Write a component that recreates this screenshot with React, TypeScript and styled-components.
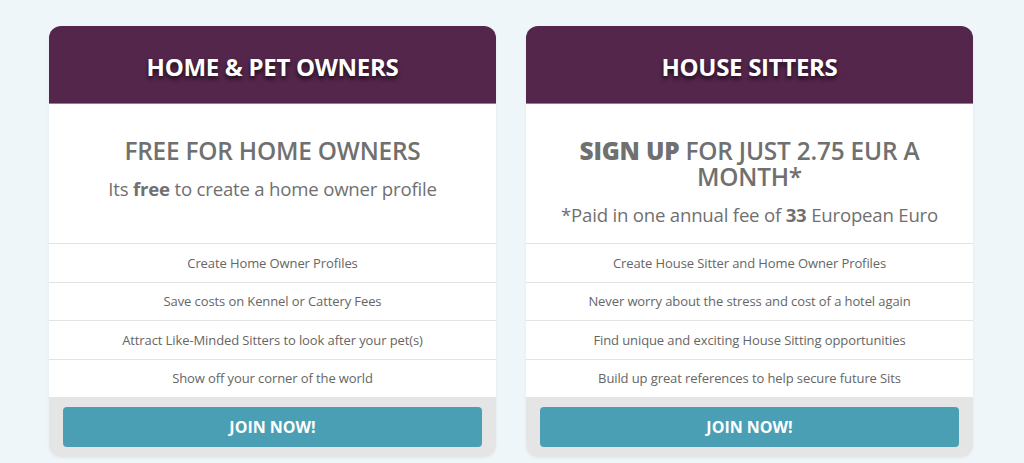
import React from 'react'
import styled, { createGlobalStyle } from 'styled-components'

const GlobalStyle = createGlobalStyle`
  html, body {
    margin: 0;
    padding: 0;
    background: #eef6f9;
    font-family: 'Open Sans', 'Noto Sans', sans-serif;
  }
`

const Page = styled.div`
  display: grid;
  grid-template-columns: repeat(2, 447px);
  gap: 30px;
  padding: 26px 0 6px 49px;
`

const Card = styled.div`
  display: flex;
  flex-direction: column;
  background: #ffffff;
  border-radius: 12px;
  overflow: hidden;
  box-shadow: 0 1px 3px rgba(0, 0, 0, 0.06);
`

const Header = styled.div`
  height: 78px;
  display: flex;
  align-items: center;
  justify-content: center;
  padding-top: 3px;
  background: #54264b;
  border-bottom: 1px solid #9c7a94;
  box-sizing: border-box;
`

const HeaderTitle = styled.h2`
  margin: 0;
  color: #ffffff;
  font-size: 24px;
  font-weight: 700;
  letter-spacing: -0.3px;
  text-shadow: 0 3px 4px rgba(0, 0, 0, 0.65);
`

const Intro = styled.div`
  flex: 1;
  display: flex;
  flex-direction: column;
  align-items: center;
  padding: 34px 24px 16px;
  text-align: center;
  color: #707070;
`

const Price = styled.h3`
  margin: 0;
  font-size: 24.4px;
  line-height: 26px;
  font-weight: 600;
  letter-spacing: -0.2px;

  b {
    font-weight: 800;
  }
`

const Note = styled.p`
  margin: 13px 0 0;
  font-size: 18.6px;
  line-height: 24px;
  letter-spacing: -0.2px;

  b {
    font-weight: 700;
  }
`

const Features = styled.ul`
  list-style: none;
  margin: 0;
  padding: 0;
`

const Feature = styled.li`
  height: 38.5px;
  box-sizing: border-box;
  display: flex;
  align-items: center;
  justify-content: center;
  border-top: 1px solid #e3e3e3;
  color: #666666;
  font-size: 13px;
  letter-spacing: -0.1px;
`

const Footer = styled.div`
  background: #e5e5e5;
  padding: 10px 14px 10px;
`

const JoinButton = styled.button`
  display: block;
  width: 100%;
  height: 40px;
  border: none;
  border-radius: 4px;
  background: #4a9fb5;
  color: #ffffff;
  font-family: inherit;
  font-size: 16px;
  font-weight: 700;
  cursor: pointer;
`

interface PlanProps {
  title: string
  price: React.ReactNode
  note: React.ReactNode
  features: string[]
}

function Plan({ title, price, note, features }: PlanProps) {
  return (
    <Card>
      <Header>
        <HeaderTitle>{title}</HeaderTitle>
      </Header>
      <Intro>
        <Price>{price}</Price>
        <Note>{note}</Note>
      </Intro>
      <Features>
        {features.map((f) => (
          <Feature key={f}>{f}</Feature>
        ))}
      </Features>
      <Footer>
        <JoinButton>JOIN NOW!</JoinButton>
      </Footer>
    </Card>
  )
}

export default function App() {
  return (
    <>
      <GlobalStyle />
      <Page>
        <Plan
          title="HOME & PET OWNERS"
          price="FREE FOR HOME OWNERS"
          note={
            <>
              Its <b>free</b> to create a home owner profile
            </>
          }
          features={[
            'Create Home Owner Profiles',
            'Save costs on Kennel or Cattery Fees',
            'Attract Like-Minded Sitters to look after your pet(s)',
            'Show off your corner of the world',
          ]}
        />
        <Plan
          title="HOUSE SITTERS"
          price={
            <>
              <b>SIGN UP</b> FOR JUST 2.75 EUR A MONTH*
            </>
          }
          note={
            <>
              *Paid in one annual fee of <b>33</b> European Euro
            </>
          }
          features={[
            'Create House Sitter and Home Owner Profiles',
            'Never worry about the stress and cost of a hotel again',
            'Find unique and exciting House Sitting opportunities',
            'Build up great references to help secure future Sits',
          ]}
        />
      </Page>
    </>
  )
}
